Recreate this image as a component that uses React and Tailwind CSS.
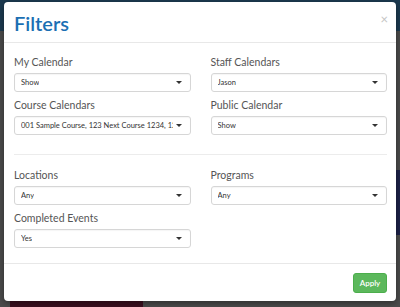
const Select = ({ value }) => (
  <div className="h-[19px] border border-[#d6d6d6] rounded-[3px] bg-white flex items-center justify-between pl-[6px] pr-[8px] overflow-hidden shadow-[inset_0_1px_1px_rgba(0,0,0,0.04)]">
    <span className="min-w-0 text-[7.5px] text-[#333] whitespace-nowrap overflow-hidden">{value}</span>
    <span className="w-0 h-0 border-l-[3px] border-r-[3px] border-t-[3px] border-l-transparent border-r-transparent border-t-[#333] shrink-0 ml-[3px]" />
  </div>
);

const Field = ({ label, value }) => (
  <div className="flex flex-col min-w-0">
    <label className="text-[10.5px] text-[#555] leading-[13px] mb-[4px]">{label}</label>
    <Select value={value} />
  </div>
);

const App = () => {
  return (
    <div className="w-[400px] h-[307px] relative overflow-hidden bg-[#4b4b4b]" style={{ fontFamily: '"Source Sans Pro", Lato, "Open Sans", sans-serif' }}>
      <div className="h-[31px] bg-[#1c3a50]" />
      <div className="absolute right-0 top-[170px] w-[4px] h-[65px] bg-[#1d2148]" />
      <div className="absolute left-[10px] bottom-0 w-[133px] h-[6px] bg-[#3b1020]" />

      <div className="absolute left-[4px] top-[2px] w-[392px] h-[299px] bg-white rounded-[4px] shadow-[0_2px_6px_rgba(0,0,0,0.4)] flex flex-col">
        <div className="h-[41px] shrink-0 border-b border-[#e8e8e8] flex items-center justify-between pl-[10px] pr-[8px]">
          <h1 className="text-[20px] font-semibold text-[#1b6fb3] leading-none mt-[1px]">Filters</h1>
          <span className="text-[13px] text-[#c4c4c4] leading-none -mt-[6px]">×</span>
        </div>

        <div className="pl-[10px] pr-[9px] pt-[13px] flex-1">
          <div className="grid grid-cols-2 gap-x-[20px] gap-y-[7px]">
            <Field label="My Calendar" value="Show" />
            <Field label="Staff Calendars" value="Jason" />
            <Field label="Course Calendars" value="001 Sample Course, 123 Next Course 1234, 123" />
            <Field label="Public Calendar" value="Show" />
          </div>
          <div className="border-t border-[#ececec] mt-[19px] mb-[14px]" />
          <div className="grid grid-cols-2 gap-x-[20px] gap-y-[7px]">
            <Field label="Locations" value="Any" />
            <Field label="Programs" value="Any" />
            <Field label="Completed Events" value="Yes" />
          </div>
        </div>

        <div className="h-[38px] shrink-0 border-t border-[#e8e8e8] flex items-center justify-end pr-[9px]">
          <button className="h-[20px] w-[34px] flex items-center justify-center bg-[#5cb85c] border border-[#4cae4c] rounded-[3px] text-white text-[8px] font-semibold">Apply</button>
        </div>
      </div>
    </div>
  );
};

export default App;
